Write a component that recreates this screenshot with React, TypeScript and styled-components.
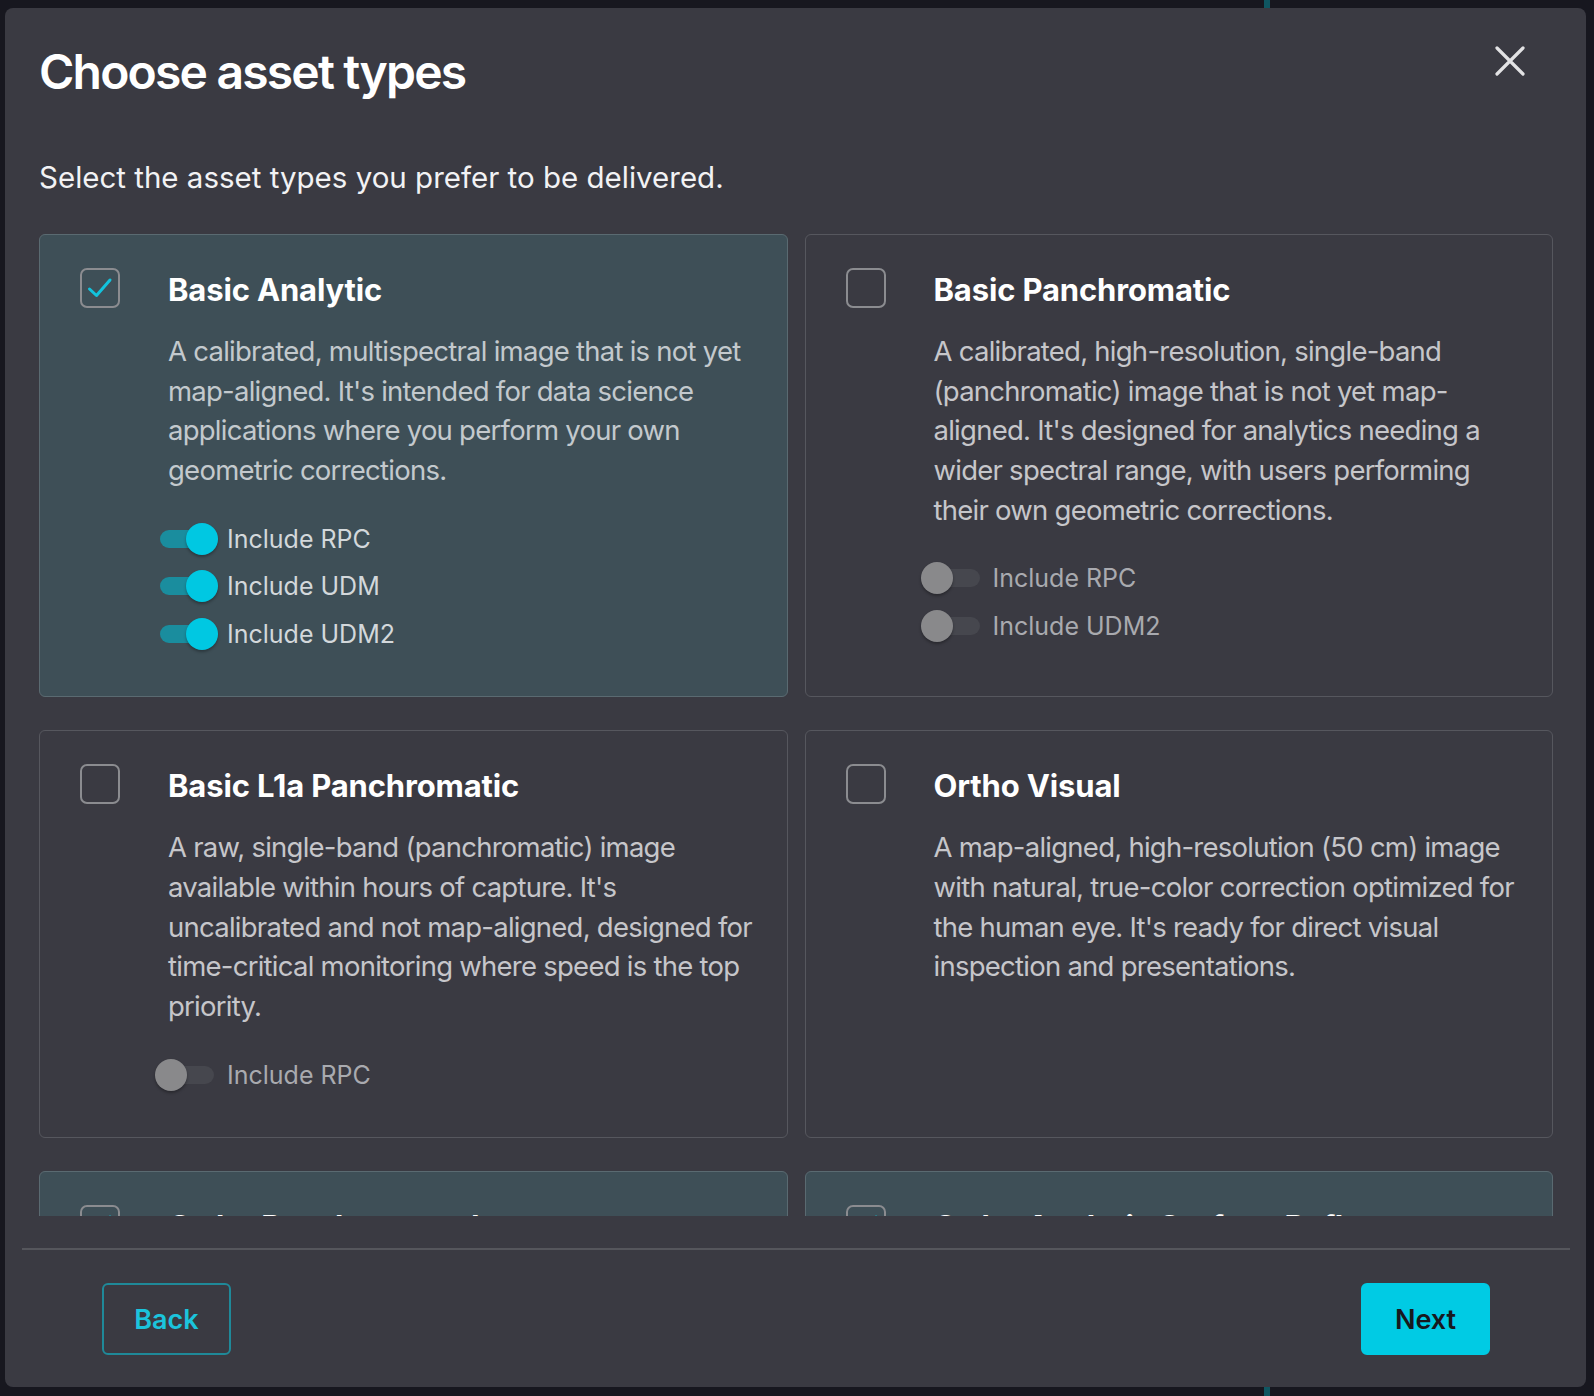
import { useState } from 'react';
import styled, { createGlobalStyle } from 'styled-components';

const GlobalStyle = createGlobalStyle`
  html, body {
    margin: 0;
    padding: 0;
  }
  body {
    font-family: Inter, "Noto Sans", "Liberation Sans", sans-serif;
    height: 1396px;
    overflow: hidden;
    background:
      linear-gradient(to right, transparent 1264px, #0f5661 1264px, #0f5661 1270px, transparent 1270px),
      #17171f;
  }
  * { box-sizing: border-box; }
`;

const Modal = styled.div`
  margin: 8px 8px 0 5px;
  width: 1581px;
  height: 1379px;
  background: #3a3a42;
  border-radius: 8px;
  display: flex;
  flex-direction: column;
`;

const Header = styled.div`
  display: flex;
  justify-content: space-between;
  align-items: flex-start;
  padding: 35px 60px 0 34px;
`;

const Title = styled.h1`
  margin: 0;
  font-size: 48px;
  line-height: 58px;
  font-weight: 600;
  color: #ffffff;
  letter-spacing: -1.8px;
`;

const CloseButton = styled.button`
  background: none;
  border: none;
  padding: 0;
  margin-top: 2px;
  width: 32px;
  height: 32px;
  cursor: pointer;
  display: flex;
  align-items: center;
  justify-content: center;
`;

const Subtitle = styled.p`
  margin: 56px 0 0 34px;
  font-size: 29.5px;
  line-height: 40px;
  color: #f2f2f4;
`;

const ScrollArea = styled.div`
  flex: 1;
  overflow: hidden;
  margin-top: 37px;
  padding: 0 33px 0 34px;
`;

const Grid = styled.div`
  display: grid;
  grid-template-columns: 1fr 1fr;
  column-gap: 17px;
  row-gap: 33px;
`;

const Card = styled.div<{ $selected?: boolean }>`
  display: flex;
  gap: 48px;
  padding: 33px 30px 39px 40px;
  border-radius: 6px;
  border: 1.5px solid ${p => (p.$selected ? '#5a6a71' : '#56575e')};
  background: ${p => (p.$selected ? '#3e4f57' : 'transparent')};
  cursor: pointer;
`;

const Box = styled.div`
  flex: 0 0 40px;
  width: 40px;
  height: 40px;
  border: 2px solid #8b8c90;
  border-radius: 7px;
  display: flex;
  align-items: center;
  justify-content: center;
`;

const Body = styled.div`
  flex: 1;
  min-width: 0;
`;

const CardTitle = styled.h2`
  margin: 0;
  font-size: 31px;
  line-height: 44px;
  font-weight: 700;
  letter-spacing: -0.15px;
  color: #ffffff;
`;

const Description = styled.p<{ $selected?: boolean }>`
  margin: 20px 0 0 0;
  font-size: 27.5px;
  line-height: 39.7px;
  letter-spacing: -0.75px;
  color: ${p => (p.$selected ? '#c3c9cd' : '#c6c6ca')};
`;

const Options = styled.div`
  margin: 24px 0 0 -13px;
  display: flex;
  flex-direction: column;
`;

const OptionRow = styled.label`
  display: flex;
  align-items: center;
  gap: 8px;
  height: 47.5px;
  cursor: pointer;
`;

const Switch = styled.span`
  position: relative;
  flex: 0 0 64px;
  width: 64px;
  height: 32px;
`;

const Track = styled.span<{ $on: boolean }>`
  position: absolute;
  left: 5px;
  top: 7px;
  width: 54px;
  height: 18px;
  border-radius: 9px;
  background: ${p => (p.$on ? '#1a8d9e' : '#46474e')};
`;

const Knob = styled.span<{ $on: boolean }>`
  position: absolute;
  top: 0;
  left: ${p => (p.$on ? '31px' : '0')};
  width: 32px;
  height: 32px;
  border-radius: 50%;
  background: ${p => (p.$on ? '#00c8e2' : '#89898b')};
  box-shadow: 0 2px 3px rgba(0, 0, 0, 0.3);
`;

const OptionLabel = styled.span<{ $on: boolean }>`
  font-size: 25px;
  color: ${p => (p.$on ? '#d3d8db' : '#a9aaaf')};
`;

const Footer = styled.div`
  margin: 32px 16px 0 17px;
  border-top: 2px solid #55565c;
  padding: 33px 80px 32px 80px;
  display: flex;
  justify-content: space-between;
`;

const Button = styled.button<{ $primary?: boolean }>`
  width: 129px;
  height: 72px;
  border-radius: 6px;
  font-family: inherit;
  font-size: 27px;
  font-weight: 600;
  cursor: pointer;
  border: 2px solid ${p => (p.$primary ? '#00cbe4' : '#1f8999')};
  background: ${p => (p.$primary ? '#00cbe4' : 'transparent')};
  color: ${p => (p.$primary ? '#18191e' : '#1bc4dc')};
`;

type Asset = {
  title: string;
  text: string;
  options: string[];
};

const assets: Asset[] = [
  {
    title: 'Basic Analytic',
    text: "A calibrated, multispectral image that is not yet map-aligned. It's intended for data science applications where you perform your own geometric corrections.",
    options: ['Include RPC', 'Include UDM', 'Include UDM2'],
  },
  {
    title: 'Basic Panchromatic',
    text: "A calibrated, high-resolution, single-band (panchromatic) image that is not yet map-aligned. It's designed for analytics needing a wider spectral range, with users performing their own geometric corrections.",
    options: ['Include RPC', 'Include UDM2'],
  },
  {
    title: 'Basic L1a Panchromatic',
    text: "A raw, single-band (panchromatic) image available within hours of capture. It's uncalibrated and not map-aligned, designed for time-critical monitoring where speed is the top priority.",
    options: ['Include RPC'],
  },
  {
    title: 'Ortho Visual',
    text: "A map-aligned, high-resolution (50 cm) image with natural, true-color correction optimized for the human eye. It's ready for direct visual inspection and presentations.",
    options: [],
  },
  {
    title: 'Ortho Pansharpened',
    text: 'A map-aligned, pansharpened image.',
    options: [],
  },
  {
    title: 'Ortho Analytic Surface Reflectance',
    text: 'A map-aligned, corrected image.',
    options: [],
  },
];

const CheckMark = () => (
  <svg width="30" height="30" viewBox="0 0 30 30">
    <path d="M4.5 16 L11.5 22.5 L25 7" fill="none" stroke="#12c3dd" strokeWidth="3" strokeLinecap="round" strokeLinejoin="round" />
  </svg>
);

export default function App() {
  const [selected, setSelected] = useState<boolean[]>([true, false, false, false, true, true]);

  const toggle = (i: number) => setSelected(s => s.map((v, j) => (j === i ? !v : v)));

  return (
    <>
      <GlobalStyle />
      <Modal>
        <Header>
          <Title>Choose asset types</Title>
          <CloseButton aria-label="Close">
            <svg width="30" height="30" viewBox="0 0 30 30">
              <path d="M2 2 L28 28 M28 2 L2 28" stroke="#e2e2e4" strokeWidth="3.2" strokeLinecap="round" />
            </svg>
          </CloseButton>
        </Header>
        <Subtitle>Select the asset types you prefer to be delivered.</Subtitle>
        <ScrollArea>
          <Grid>
            {assets.map((a, i) => {
              const on = selected[i];
              return (
                <Card key={a.title} $selected={on} onClick={() => toggle(i)}>
                  <Box>{on && <CheckMark />}</Box>
                  <Body>
                    <CardTitle>{a.title}</CardTitle>
                    <Description $selected={on}>{a.text}</Description>
                    {a.options.length > 0 && (
                      <Options>
                        {a.options.map(o => (
                          <OptionRow key={o}>
                            <Switch>
                              <Track $on={on} />
                              <Knob $on={on} />
                            </Switch>
                            <OptionLabel $on={on}>{o}</OptionLabel>
                          </OptionRow>
                        ))}
                      </Options>
                    )}
                  </Body>
                </Card>
              );
            })}
          </Grid>
        </ScrollArea>
        <Footer>
          <Button>Back</Button>
          <Button $primary>Next</Button>
        </Footer>
      </Modal>
    </>
  );
}
